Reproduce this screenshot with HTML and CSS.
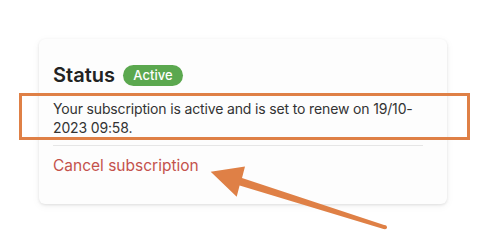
FILE: index.html
```html
<!DOCTYPE html>
<html>
<head>
<meta charset="utf-8">
<link rel="stylesheet" href="styles.css">
</head>
<body>
<div class="page">
  <div class="card">
    <div class="title-row">
      <h2 class="title">Status</h2>
      <span class="badge">Active</span>
    </div>
    <p class="desc">Your subscription is active and is set to renew on 19/10-2023 09:58.</p>
    <hr class="divider">
    <a class="cancel" href="#">Cancel subscription</a>
  </div>
  <div class="highlight"></div>
  <svg class="arrow" width="486" height="244" viewBox="0 0 486 244">
    <polygon points="210.7,171.7 245,166.5 242,177.9 385.6,225.4 384.4,229.2 239.6,185.5 236.7,196.7" fill="#df8046"/>
    <circle cx="385" cy="227.3" r="2" fill="#df8046"/>
  </svg>
</div>
</body>
</html>
```
FILE: styles.css
```css
* { box-sizing: border-box; }
html, body { margin: 0; padding: 0; background: #ffffff; }
body { font-family: Inter, "Noto Sans", "Liberation Sans", sans-serif; }
.page { position: relative; width: 486px; height: 244px; padding: 39px 0 0 39px; }
.card {
  width: 408px;
  height: 165px;
  background: #fdfdfd;
  border-radius: 6px;
  box-shadow: 0 1px 3px rgba(0,0,0,0.10), 0 2px 8px rgba(0,0,0,0.05);
  padding: 24px 24px 0 14px;
}
.title-row { display: flex; align-items: center; gap: 8px; height: 24px; }
.title { margin: 0; font-size: 20px; line-height: 24px; font-weight: 600; color: #222; }
.badge {
  display: inline-flex; align-items: center; justify-content: center;
  width: 60px; height: 21px; border-radius: 11px;
  background: #5ba84f; color: #fff; font-size: 13px; font-weight: 500;
}
.desc { margin: 12px 0 0; font-size: 14px; line-height: 19px; letter-spacing: -0.15px; color: #333; }
.divider { margin: 8px 0 0; border: 0; border-top: 1px solid #e6e6e6; height: 0; }
.cancel { display: block; margin-top: 10px; font-size: 15.5px; line-height: 20px; color: #c4524c; text-decoration: none; }
.highlight {
  position: absolute; left: 19px; top: 93px; width: 451px; height: 47px;
  border: 3px solid #df8046;
}
.arrow { position: absolute; left: 0; top: 0; }
```
